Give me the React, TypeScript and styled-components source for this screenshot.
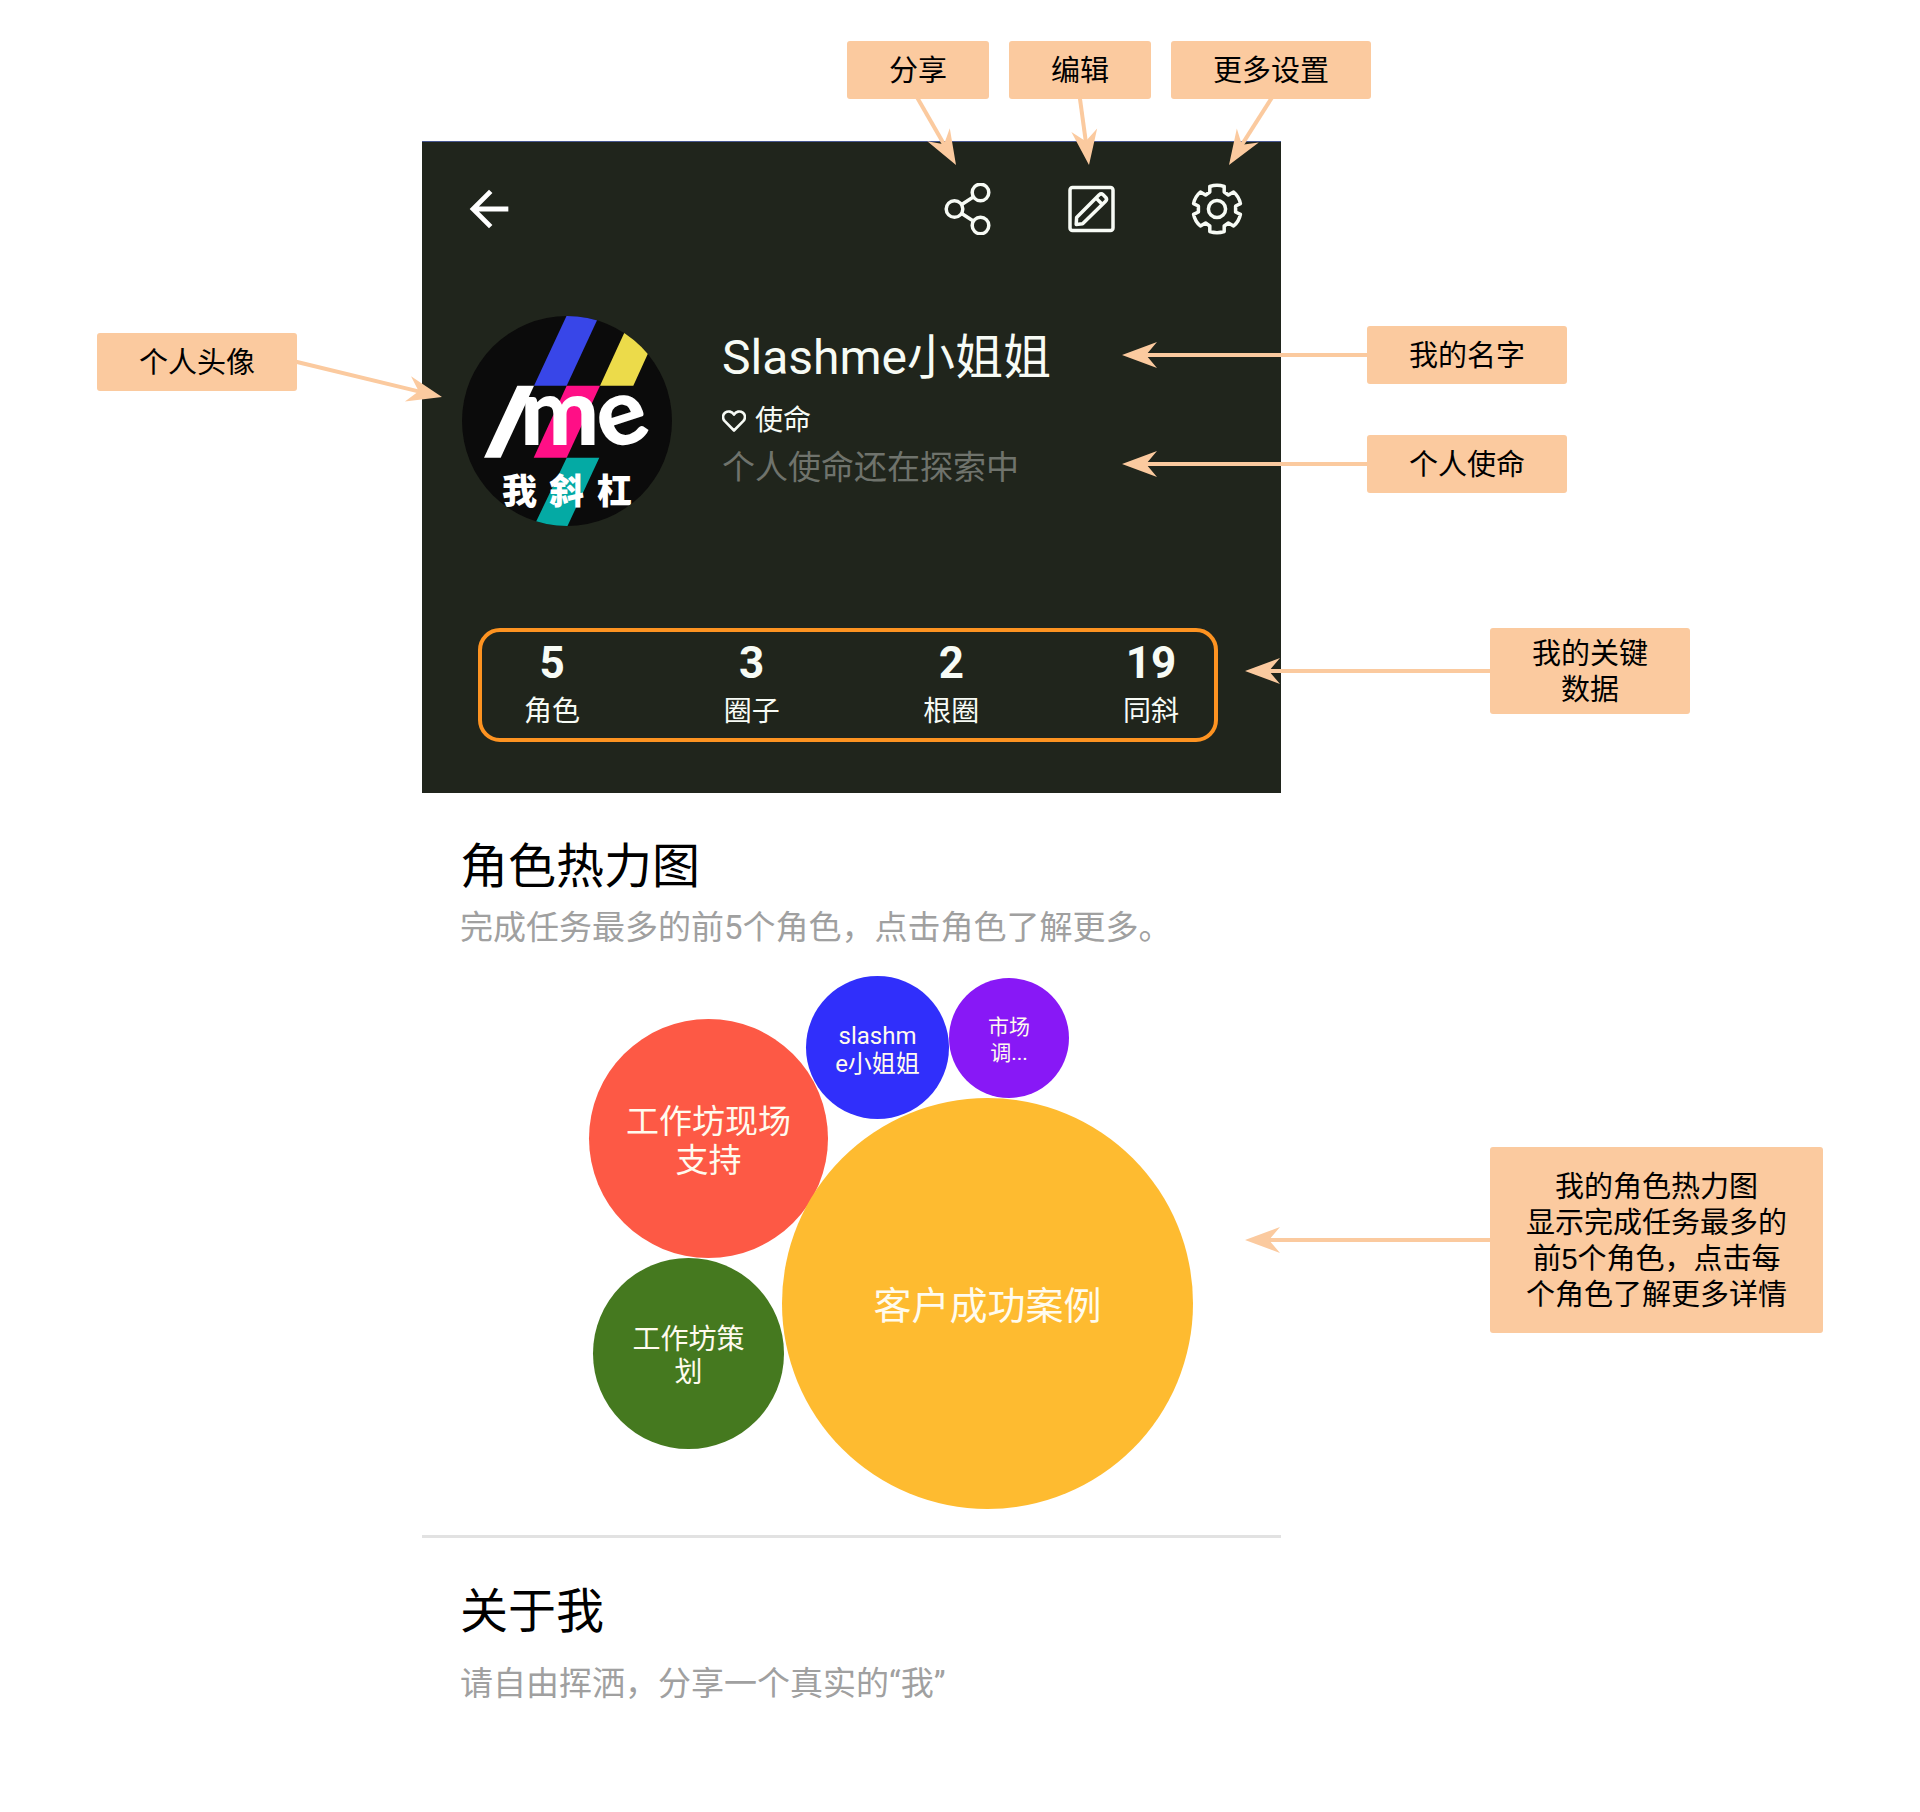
import React from "react";
import styled, { createGlobalStyle } from "styled-components";

const peach = "#fbca9f";
const ink = "#20251c";
const cjk = '"Noto Sans CJK SC", sans-serif';

const GlobalStyle = createGlobalStyle`
  *, *::before, *::after { box-sizing: border-box; }
  body {
    margin: 0;
    background: #fff;
    color: #000;
    font-family: Roboto, ${cjk};
  }
  h1, h2, p, dl, dt, dd { margin: 0; font-weight: 400; }
  button { padding: 0; border: 0; background: none; color: inherit; font: inherit; cursor: pointer; }
`;

/* ---------- page grid ---------- */

const Page = styled.main`
  padding: 41px 0 80px;
`;

const Band = styled.div`
  display: grid;
  grid-template-columns: 422fr 859fr 639fr;
`;

const TopNotes = styled.div`
  grid-column: 2;
  display: flex;
  justify-content: flex-end;
  gap: 20px;
  margin: 0 -90px 42px 0;
`;

const LeftNotes = styled.aside`
  display: flex;
  flex-direction: column;
  align-items: flex-end;
  padding: 192px 125px 0 0;
`;

const RightNotes = styled.aside<{ $top: number }>`
  grid-column: 3;
  display: flex;
  flex-direction: column;
  align-items: flex-start;
  justify-content: space-between;
  padding: ${(p) => p.$top}px 0 79px 86px;
`;

const NoteStack = styled.div`
  display: flex;
  flex-direction: column;
  gap: 51px;
`;

/* ---------- annotation ---------- */

type Side = "left" | "right" | "bottom";

const Note = styled.div<{ $tall?: boolean; $indent?: boolean }>`
  position: relative;
  z-index: 1;
  padding: ${(p) => (p.$tall ? "22px 36px 20px" : "12px 42px 10px")};
  margin-left: ${(p) => (p.$indent ? 123 : 0)}px;
  border-radius: 3px;
  background: ${peach};
  font: 400 29px/36px "Liberation Sans", ${cjk};
  text-align: center;
  white-space: nowrap;
`;

const PairNote = styled(Note)`
  padding: 8px 42px 6px;
`;

const ArrowSvg = styled.svg<{ $side: Side }>`
  position: absolute;
  top: ${(p) => (p.$side === "bottom" ? "100%" : "50%")};
  left: ${(p) => ({ left: "0", right: "100%", bottom: "50%" })[p.$side]};
  width: 1px;
  height: 1px;
  overflow: visible;
  pointer-events: none;
`;

function Arrow({ side, dx, dy }: { side: Side; dx: number; dy: number }) {
  const length = Math.hypot(dx, dy);
  const angle = (Math.atan2(dy, dx) * 180) / Math.PI;
  return (
    <ArrowSvg $side={side} aria-hidden="true">
      <g transform={`rotate(${angle})`} fill={peach}>
        <rect x={-2} y={-2} width={length - 20} height={4} />
        <path d={`M${length} 0l-35 -13l11 13l-11 13z`} />
      </g>
    </ArrowSvg>
  );
}

/* ---------- profile header ---------- */

const Header = styled.header`
  grid-column: 2;
  border-top: 1px solid #46568f;
  background: ${ink};
  color: #f7fbf5;
  padding-bottom: 51px;
`;

const Toolbar = styled.nav`
  display: flex;
  align-items: center;
  gap: 73px;
  height: 96px;
  padding: 38px 38px 0;
`;

const IconButton = styled.button<{ $start?: boolean }>`
  display: flex;
  margin-right: ${(p) => (p.$start ? "auto" : "0")};
`;

const Identity = styled.section`
  display: flex;
  gap: 50px;
  padding: 78px 40px 0;
`;

const Avatar = styled.svg`
  flex: none;
  display: block;
  border-radius: 50%;
`;

const Bio = styled.div`
  display: flex;
  flex-direction: column;
  padding-top: 12px;
`;

const Name = styled.h1`
  font-size: 48px;
  line-height: 60px;
`;

const MissionLabel = styled.h2`
  display: flex;
  align-items: center;
  gap: 9px;
  padding-top: 13px;
  font-size: 28px;
  line-height: 40px;
`;

const Mission = styled.p`
  padding-top: 3px;
  color: #6f736c;
  font-size: 33px;
  line-height: 48px;
`;

const Stats = styled.dl`
  display: flex;
  justify-content: space-between;
  margin: 102px 63px 0 56px;
  padding: 5px 35px 3px 42px;
  border: 4px solid #fd9321;
  border-radius: 22px;
`;

const Stat = styled.div`
  display: flex;
  flex-direction: column-reverse;
  align-items: center;
`;

const StatLabel = styled.dt`
  font-size: 28px;
  line-height: 46px;
`;

const StatValue = styled.dd`
  font-size: 44px;
  font-weight: 700;
  line-height: 52px;
`;

/* ---------- content sections ---------- */

const Section = styled.section<{ $ruled?: boolean }>`
  grid-column: 2;
  padding: 44px 0 25px;
  border-bottom: ${(p) => (p.$ruled ? "3px solid #e2e2e2" : "0")};
`;

const SectionTitle = styled.h2`
  padding-left: 38px;
  font-size: 48px;
  line-height: 60px;
`;

const SectionText = styled.p<{ $gap: number }>`
  padding: ${(p) => p.$gap}px 0 0 38px;
  color: #a0a0a0;
  font-size: 33px;
  line-height: 48px;
  white-space: nowrap;
`;

const BubbleChart = styled.div`
  position: relative;
  width: 604px;
  height: 534px;
  margin: 24px 0 0 167px;
`;

const Bubble = styled.button<{ $x: number; $y: number; $size: number; $fill: string; $text: number; $line: number }>`
  && {
    position: absolute;
    left: ${(p) => p.$x}px;
    top: ${(p) => p.$y}px;
    width: ${(p) => p.$size}px;
    height: ${(p) => p.$size}px;
    padding-top: 4px;
    border-radius: 50%;
    background: ${(p) => p.$fill};
    color: #fffbee;
    font-size: ${(p) => p.$text}px;
    line-height: ${(p) => p.$line}px;
    white-space: pre-line;
  }
`;

/* ---------- icons ---------- */

const iconProps = {
  width: 52,
  height: 52,
  viewBox: "-26 -26 52 52",
  fill: "none",
  stroke: "currentColor",
  strokeWidth: 3.5,
  strokeLinejoin: "round" as const,
  "aria-hidden": true,
};

const BackIcon = () => (
  <svg width="58" height="58" viewBox="0 0 24 24" fill="#fff" aria-hidden="true">
    <path d="M20 11H7.83l5.59-5.59L12 4l-8 8 8 8 1.41-1.41L7.83 13H20v-2z" />
  </svg>
);

const ShareIcon = () => (
  <svg {...iconProps}>
    <circle cx="-12.5" cy="0" r="8.3" />
    <circle cx="13.5" cy="-16.5" r="8.3" />
    <circle cx="13.5" cy="16.5" r="8.3" />
    <path d="M-5.3 -4.5L6.3 -12M-5.3 4.5L6.3 12" />
  </svg>
);

const EditIcon = () => (
  <svg {...iconProps}>
    <rect x="-22" y="-21.5" width="43" height="43" rx="2.5" />
    <path d="M-15.8 15.4L-15.4 8.6L7.2 -14.2Q9.2 -16 11.2 -14.2L13.8 -11.6Q15.4 -9.6 13.6 -7.8L-9.4 14.8ZM4 -11L10.4 -4.6" />
  </svg>
);

const SettingsIcon = () => (
  <svg {...iconProps}>
    <circle r="8.6" />
    <path d="M-7.2 -22.5Q0 -25 7.2 -22.5V-17L11.4 -14L16.6 -17Q22 -12.5 23.4 -5.4L18.6 -3V3L23.4 5.4Q22 12.5 16.6 17L11.4 14L7.2 17V22.5Q0 25 -7.2 22.5V17L-11.4 14L-16.6 17Q-22 12.5 -23.4 5.4L-18.6 3V-3L-23.4 -5.4Q-22 -12.5 -16.6 -17L-11.4 -14L-7.2 -17Z" />
  </svg>
);

const HeartIcon = () => (
  <svg width="24" height="24" viewBox="2 2 24 24" fill="none" stroke="currentColor" strokeWidth="2.6" strokeLinejoin="round" aria-hidden="true">
    <path d="M14 23.5L4.8 14.2C2.2 11.4 2.6 7.4 5.2 5.6C8.2 3.5 12 4.4 14 7.6C16 4.4 19.8 3.5 22.8 5.6C25.4 7.4 25.8 11.4 23.2 14.2Z" />
  </svg>
);

const AvatarLogo = () => (
  <Avatar width="210" height="210" viewBox="0 0 210 210" role="img" aria-label="我斜杠">
    <rect width="210" height="210" fill="#0b0b0b" />
    <path d="M104.5 0H137L104.7 69.7H72Z" fill="#3846e8" />
    <path d="M170 0H203L171.3 69.7H138Z" fill="#ecdb4a" />
    <path d="M104.7 69.7H138L104.7 141.7H71.7Z" fill="#ff0f86" />
    <path d="M104.7 141.7H137.3L105.5 210H72Z" fill="#04aaa4" />
    <path d="M55.3 69.7H72L38.7 141.7H22Z" fill="#fff" />
    <g fill="#fff" fontFamily="Lato, sans-serif" fontWeight="900" fontSize="94">
      <text x="58" y="129">m</text>
      <text x="135" y="129" transform="rotate(-18 160 105)">e</text>
    </g>
    <g fill="#fff" fontFamily='"Noto Sans CJK SC", sans-serif' fontWeight="900" fontSize="35">
      <text x="40" y="188">我</text>
      <text x="87" y="188">斜</text>
      <text x="135" y="188">杠</text>
    </g>
  </Avatar>
);

/* ---------- data ---------- */

const topNotes = [
  { text: "分享", dx: 38, dy: 66 },
  { text: "编辑", dx: 9, dy: 66 },
  { text: "更多设置", dx: -42, dy: 66 },
];

const stats = [
  { label: "角色", value: 5 },
  { label: "圈子", value: 3 },
  { label: "根圈", value: 2 },
  { label: "同斜", value: 19 },
];

const bubbles = [
  { label: "工作坊现场\n支持", x: 0, y: 43, size: 239, fill: "#fd5945", text: 33, line: 39 },
  { label: "slashm\ne小姐姐", x: 217, y: 0, size: 143, fill: "#302ffb", text: 24, line: 28 },
  { label: "市场\n调...", x: 360, y: 2, size: 120, fill: "#8818f6", text: 21, line: 26 },
  { label: "工作坊策\n划", x: 4, y: 282, size: 191, fill: "#45791f", text: 28, line: 33 },
  { label: "客户成功案例", x: 193, y: 122, size: 411, fill: "#febb30", text: 38, line: 48 },
];

export default function App() {
  return (
    <>
      <GlobalStyle />
      <Page>
        <Band>
          <TopNotes>
            {topNotes.map((n) => (
              <Note key={n.text}>
                {n.text}
                <Arrow side="bottom" dx={n.dx} dy={n.dy} />
              </Note>
            ))}
          </TopNotes>
        </Band>

        <Band>
          <LeftNotes>
            <Note>
              个人头像
              <Arrow side="right" dx={145} dy={35} />
            </Note>
          </LeftNotes>
          <Header>
            <Toolbar>
              <IconButton $start aria-label="返回"><BackIcon /></IconButton>
              <IconButton aria-label="分享"><ShareIcon /></IconButton>
              <IconButton aria-label="编辑"><EditIcon /></IconButton>
              <IconButton aria-label="更多设置"><SettingsIcon /></IconButton>
            </Toolbar>
            <Identity>
              <AvatarLogo />
              <Bio>
                <Name>Slashme小姐姐</Name>
                <MissionLabel><HeartIcon />使命</MissionLabel>
                <Mission>个人使命还在探索中</Mission>
              </Bio>
            </Identity>
            <Stats>
              {stats.map((s) => (
                <Stat key={s.label}>
                  <StatLabel>{s.label}</StatLabel>
                  <StatValue>{s.value}</StatValue>
                </Stat>
              ))}
            </Stats>
          </Header>
          <RightNotes $top={185}>
            <NoteStack>
              <Note>
                我的名字
                <Arrow side="left" dx={-245} dy={0} />
              </Note>
              <Note>
                个人使命
                <Arrow side="left" dx={-245} dy={0} />
              </Note>
            </NoteStack>
            <PairNote $indent>
              我的关键<br />数据
              <Arrow side="left" dx={-245} dy={0} />
            </PairNote>
          </RightNotes>
        </Band>

        <Band>
          <Section $ruled>
            <SectionTitle>角色热力图</SectionTitle>
            <SectionText $gap={7}>完成任务最多的前5个角色，点击角色了解更多。</SectionText>
            <BubbleChart>
              {bubbles.map((b) => (
                <Bubble key={b.label} $x={b.x} $y={b.y} $size={b.size} $fill={b.fill} $text={b.text} $line={b.line}>
                  {b.label}
                </Bubble>
              ))}
            </BubbleChart>
          </Section>
          <RightNotes $top={354}>
            <Note $tall $indent>
              我的角色热力图<br />显示完成任务最多的<br />前5个角色，点击每<br />个角色了解更多详情
              <Arrow side="left" dx={-245} dy={0} />
            </Note>
          </RightNotes>
        </Band>

        <Band>
          <Section>
            <SectionTitle>关于我</SectionTitle>
            <SectionText $gap={18}>请自由挥洒，分享一个真实的“我”</SectionText>
          </Section>
        </Band>
      </Page>
    </>
  );
}
